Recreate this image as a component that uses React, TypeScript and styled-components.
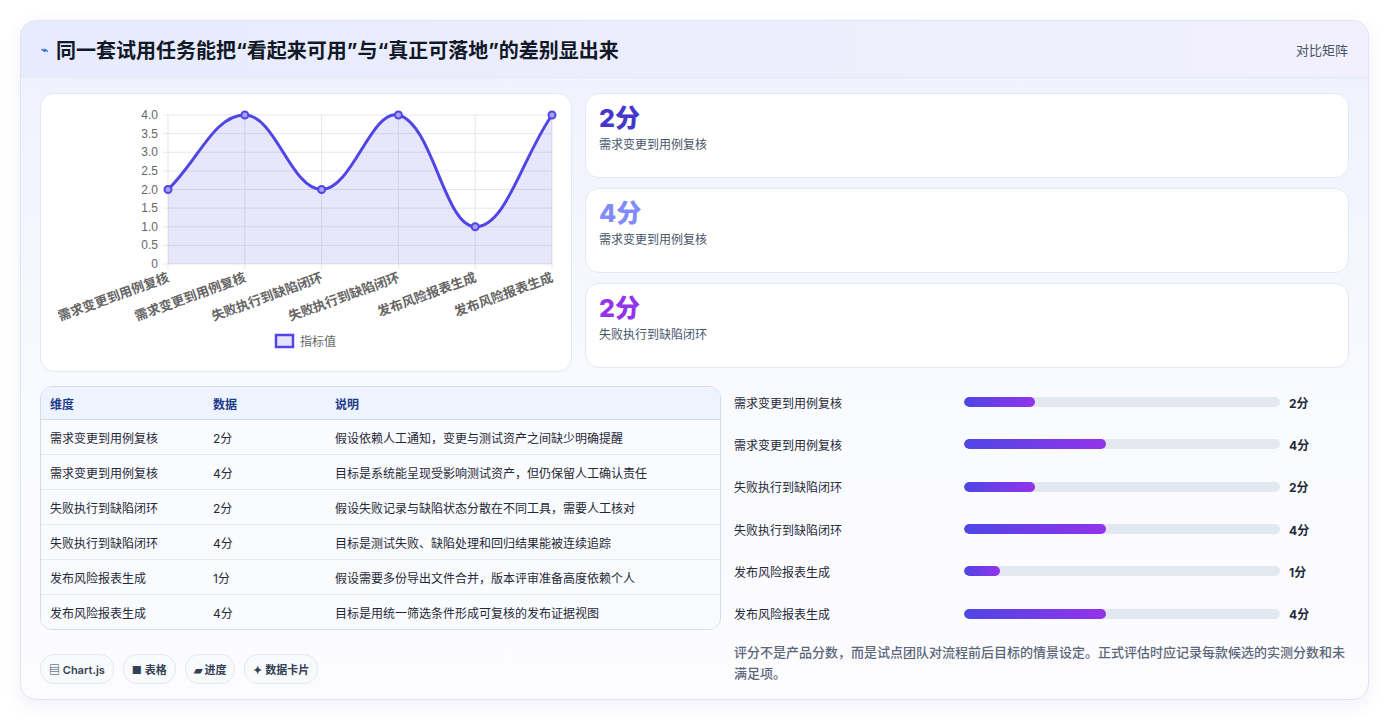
import React from "react";
import styled, { createGlobalStyle } from "styled-components";

const G = createGlobalStyle`
  body{margin:0;background:#fff;font-family:"Inter","Noto Sans CJK SC",sans-serif;}
`;
const Page = styled.div`padding:20px 21px 21px 20px;`;
const Card = styled.div`
  border:1px solid #dfe3f5;border-radius:16px;overflow:hidden;
  background:linear-gradient(180deg,#eef1fd 0%,#fafbff 60%,#fcfcff 100%);
  box-shadow:0 6px 18px rgba(70,80,160,.08);height:680px;box-sizing:border-box;
`;
const Header = styled.div`
  height:56px;display:flex;align-items:center;justify-content:space-between;padding:0 20px;
  background:linear-gradient(90deg,#e7ebfd,#f2f0fd);border-bottom:1px solid #e4e7f7;
`;
const Title = styled.h1`margin:0;font-size:20px;font-weight:700;color:#111827;display:flex;align-items:center;gap:8px;`;
const Icon = styled.span`color:#3b6fd8;font-size:12px;`;
const Tag = styled.span`font-size:13px;color:#475569;`;
const Body = styled.div`padding:15px 19px 0 19px;display:flex;flex-direction:column;gap:14px;`;
const Top = styled.div`display:grid;grid-template-columns:532px 1fr;gap:13px;`;
const ChartCard = styled.div`background:#fff;border:1px solid #e4e8f5;border-radius:14px;height:277px;`;
const Stats = styled.div`display:flex;flex-direction:column;gap:10px;`;
const Stat = styled.div`background:#fff;border:1px solid #e4e8f5;border-radius:14px;height:85px;box-sizing:border-box;padding:9px 13px;`;
const StatVal = styled.div<{c:string}>`font-size:25px;font-weight:800;color:${p=>p.c};line-height:30px;`;
const StatLbl = styled.div`font-size:12px;color:#475569;margin-top:2px;`;
const Bottom = styled.div`display:grid;grid-template-columns:681px 1fr;gap:13px;`;
const Left = styled.div`display:flex;flex-direction:column;gap:24px;`;
const Table = styled.table`width:100%;border-collapse:collapse;background:#fafbfe;border-spacing:0;font-size:12px;`;
const TWrap = styled.div`border:1px solid #d3daee;border-radius:12px;overflow:hidden;`;
const Th = styled.th`text-align:left;font-weight:600;color:#1e3a8a;background:#eef4ff;height:32px;padding:0 9px;border-bottom:1px solid #d6dcee;`;
const Td = styled.td`height:34px;padding:0 9px;color:#1f2937;border-top:1px solid #e6e9f2;`;
const Chips = styled.div`display:flex;gap:9px;`;
const Chip = styled.span`font-size:11px;font-weight:600;color:#334155;background:#f8fafc;border:1px solid #e2e8f0;border-radius:14px;padding:6px 8px;`;
const Right = styled.div`display:flex;flex-direction:column;margin-top:-5px;`;
const BarRow = styled.div`display:grid;grid-template-columns:230px 316px 60px;align-items:center;height:42.3px;font-size:12px;color:#1f2937;`;
const Track = styled.div`height:10px;background:#e2e8f0;border-radius:5px;overflow:hidden;`;
const Fill = styled.div`height:100%;border-radius:5px;background:linear-gradient(90deg,#4f46e5,#9333ea);`;
const BarVal = styled.span`padding-left:9px;font-weight:700;`;
const Note = styled.p`margin:7px 0 0;font-size:13px;line-height:21px;color:#5b6678;font-weight:500;`;

const labels = ["需求变更到用例复核","需求变更到用例复核","失败执行到缺陷闭环","失败执行到缺陷闭环","发布风险报表生成","发布风险报表生成"];
const vals = [2,4,2,4,1,4];
const notes = ["假设依赖人工通知，变更与测试资产之间缺少明确提醒","目标是系统能呈现受影响测试资产，但仍保留人工确认责任","假设失败记录与缺陷状态分散在不同工具，需要人工核对","目标是测试失败、缺陷处理和回归结果能被连续追踪","假设需要多份导出文件合并，版本评审准备高度依赖个人","目标是用统一筛选条件形成可复核的发布证据视图"];

function Chart(){
  const x0=127,x1=511,y0=21,y1=170;
  const pts=vals.map((v,i)=>[x0+(x1-x0)*i/5,y1-(y1-y0)*v/4]);
  const t=0.4;
  const cps=pts.map((c,i)=>{
    const p=pts[i-1]||c,n=pts[i+1]||c;
    const d01=Math.hypot(c[0]-p[0],c[1]-p[1]),d12=Math.hypot(n[0]-c[0],n[1]-c[1]);
    const s=d01+d12||1;const fa=t*d01/s,fb=t*d12/s;
    return {a:[c[0]-fa*(n[0]-p[0]),c[1]-fa*(n[1]-p[1])],b:[c[0]+fb*(n[0]-p[0]),c[1]+fb*(n[1]-p[1])]};
  });
  let d=`M${pts[0][0]},${pts[0][1]}`;
  for(let i=1;i<pts.length;i++){d+=` C${cps[i-1].b[0]},${cps[i-1].b[1]} ${cps[i].a[0]},${cps[i].a[1]} ${pts[i][0]},${pts[i][1]}`;}
  const ticks=[0,0.5,1,1.5,2,2.5,3,3.5,4];
  return (
    <svg width="530" height="275" style={{display:"block"}}>
      {ticks.map(v=>{const y=y1-(y1-y0)*v/4;return <g key={v}><line x1={x0-5} x2={x1} y1={y} y2={y} stroke="#e5e7eb"/><text x={x0-10} y={y+4} fontSize="12" fill="#666" textAnchor="end" fontFamily="Liberation Sans, sans-serif">{v===0?"0":v.toFixed(1)}</text></g>})}
      {pts.map((p,i)=><line key={i} x1={p[0]} x2={p[0]} y1={y0} y2={y1+5} stroke="#e5e7eb"/>)}
      <path d={d+` L${x1},${y1} L${x0},${y1} Z`} fill="rgba(99,90,220,0.15)"/>
      <path d={d} fill="none" stroke="#4f46e5" strokeWidth="3"/>
      {pts.map((p,i)=><circle key={i} cx={p[0]} cy={p[1]} r="3.5" fill="#a5a0f0" stroke="#4f46e5" strokeWidth="2"/>)}
      {pts.map((p,i)=><text key={i} transform={`translate(${p[0]+2},${y1+17}) rotate(-20)`} textAnchor="end" fontSize="13" fontWeight="600" fill="#666">{labels[i]}</text>)}
      <rect x="235" y="241" width="17" height="12" fill="#e6e4fb" stroke="#4f46e5" strokeWidth="2.5"/>
      <text x="259" y="252" fontSize="12" fill="#666">指标值</text>
    </svg>
  );
}

export default function App(){
  return (<><G/><Page><Card>
    <Header><Title><Icon>⌁</Icon>同一套试用任务能把“看起来可用”与“真正可落地”的差别显出来</Title><Tag>对比矩阵</Tag></Header>
    <Body>
      <Top>
        <ChartCard><Chart/></ChartCard>
        <Stats>
          <Stat><StatVal c="#4338ca">2分</StatVal><StatLbl>需求变更到用例复核</StatLbl></Stat>
          <Stat><StatVal c="#818cf8">4分</StatVal><StatLbl>需求变更到用例复核</StatLbl></Stat>
          <Stat><StatVal c="#9333ea">2分</StatVal><StatLbl>失败执行到缺陷闭环</StatLbl></Stat>
        </Stats>
      </Top>
      <Bottom>
        <Left>
          <TWrap><Table>
            <thead><tr><Th style={{width:145}}>维度</Th><Th style={{width:104}}>数据</Th><Th>说明</Th></tr></thead>
            <tbody>{labels.map((l,i)=><tr key={i}><Td>{l}</Td><Td>{vals[i]}分</Td><Td>{notes[i]}</Td></tr>)}</tbody>
          </Table></TWrap>
          <Chips><Chip>▤ Chart.js</Chip><Chip>■ 表格</Chip><Chip>▰ 进度</Chip><Chip>✦ 数据卡片</Chip></Chips>
        </Left>
        <Right>
          {labels.map((l,i)=><BarRow key={i}><span>{l}</span><Track><Fill style={{width:`${vals[i]*11.25}%`}}/></Track><BarVal>{vals[i]}分</BarVal></BarRow>)}
          <Note>评分不是产品分数，而是试点团队对流程前后目标的情景设定。正式评估时应记录每款候选的实测分数和未满足项。</Note>
        </Right>
      </Bottom>
    </Body>
  </Card></Page></>);
}
